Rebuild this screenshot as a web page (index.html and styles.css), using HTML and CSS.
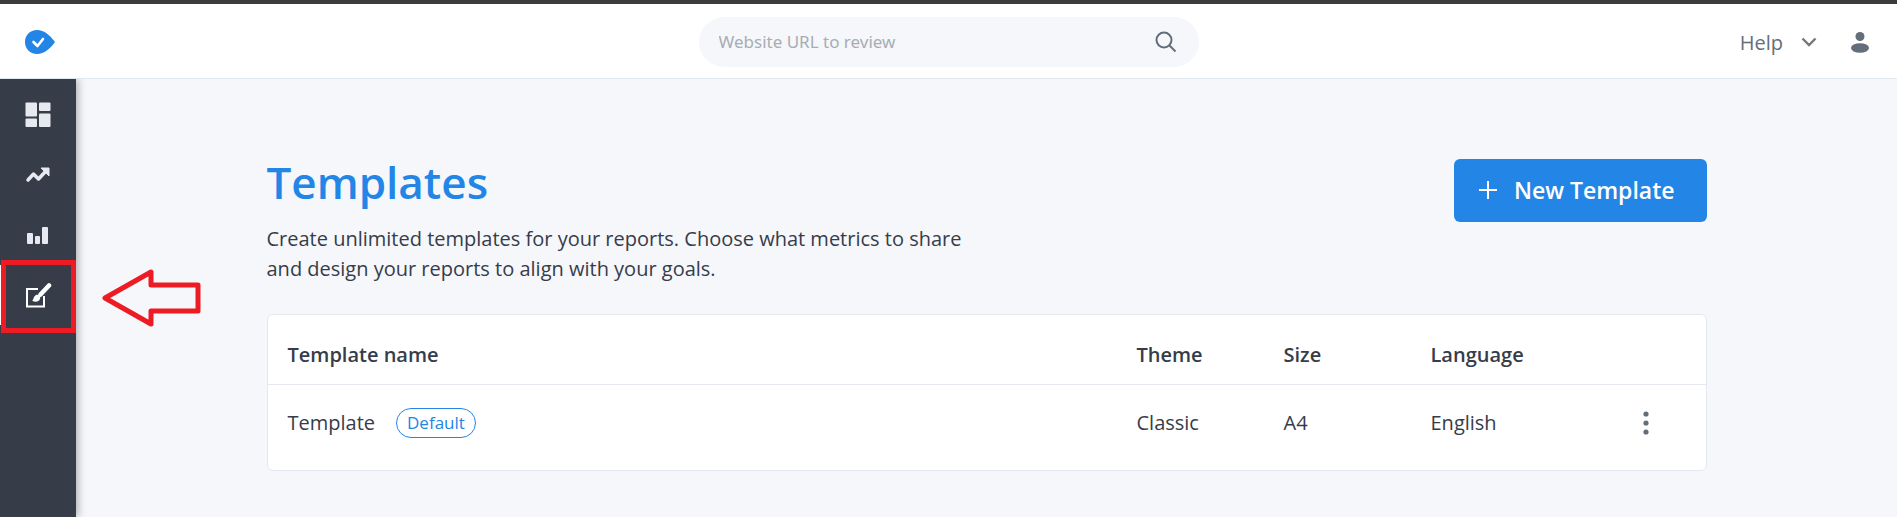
FILE: index.html
```
<!DOCTYPE html>
<html lang="en">

<head>
    <meta charset="UTF-8">
    <meta name="viewport" content="width=device-width, initial-scale=1.0">
    <title>Templates</title>
    <link rel="stylesheet" href="styles.css">
</head>

<body>
    <header class="topbar">
        <a class="logo" href="#" aria-label="Home">
            <svg width="30" height="24" viewBox="0 0 30 24">
                <path d="M12 0C5 0 0 5.2 0 12s5 12 12 12c7.500 0 13-5.500 17.500-11.300a1 1 0 0 0 0-1.400C25 5.500 19.500 0 12 0z" fill="#2386e6" />
                <path d="M8.500 12l4 4L18 9" fill="none" stroke="#fff" stroke-width="2.600" stroke-linecap="round" stroke-linejoin="round" />
            </svg>
        </a>

        <form class="search">
            <input class="search-input" type="text" aria-label="Website URL" placeholder="Website URL to review">
            <button class="icon-button" type="button" aria-label="Search">
                <svg width="22" height="22" viewBox="0 0 22 22" fill="none" stroke="#646e7b" stroke-width="2">
                    <circle cx="9" cy="9" r="7.500" />
                    <path d="M14.500 14.500L20.500 20.500" />
                </svg>
            </button>
        </form>

        <div class="account">
            <button class="help" type="button">
                Help
                <svg width="16" height="10" viewBox="0 0 16 10" fill="none" stroke="#777" stroke-width="2.400">
                    <path d="M1.500 1.500L8 8l6.500-6.500" />
                </svg>
            </button>
            <button class="icon-button" type="button" aria-label="Account">
                <svg width="18" height="21" viewBox="0 0 18 21" fill="#646e7b">
                    <circle cx="9" cy="4.500" r="4.500" />
                    <ellipse cx="9" cy="16" rx="9" ry="4.800" />
                </svg>
            </button>
        </div>
    </header>

    <div class="layout">
        <nav class="sidebar">
            <a class="nav-item" href="#" aria-label="Dashboard">
                <svg width="26" height="26" viewBox="0 0 26 26" fill="#e6e9ef">
                    <rect x="0.500" y="0.500" width="11.500" height="14" rx="1" />
                    <rect x="14" y="0.500" width="11.500" height="8.500" rx="1" />
                    <rect x="0.500" y="16.500" width="11.500" height="8.500" rx="1" />
                    <rect x="14" y="11.500" width="11.500" height="13.500" rx="1" />
                </svg>
            </a>
            <a class="nav-item" href="#" aria-label="Trends">
                <svg width="26" height="26" viewBox="0 0 26 26" fill="none" stroke="#e6e9ef" stroke-width="3.500">
                    <path d="M3 18L8.500 12l5 5L21 9" stroke-linecap="round" stroke-linejoin="round" />
                    <path d="M16 6h8v8z" fill="#e6e9ef" stroke-width="1" stroke-linejoin="round" />
                </svg>
            </a>
            <a class="nav-item" href="#" aria-label="Reports">
                <svg width="26" height="26" viewBox="0 0 26 26" fill="#e6e9ef">
                    <rect x="2" y="11" width="6" height="11" rx="1" />
                    <rect x="10" y="14" width="5" height="8" rx="1" />
                    <rect x="17" y="5" width="6" height="17" rx="1" />
                </svg>
            </a>
            <a class="nav-item active" href="#" aria-label="Templates">
                <svg width="26" height="26" viewBox="0 0 26 26">
                    <path d="M12 7H1v17.500h17V14" fill="none" stroke="#fff" stroke-width="2" />
                    <path d="M6 18.500c2-.5 1-4 4-5.500 2.500-1 5 1.500 4 4-1.200 3-5 3.500-8 1.500z" fill="#fff" />
                    <path d="M14.500 12.500l8.500-9" stroke="#fff" stroke-width="4.500" stroke-linecap="round" />
                </svg>
                <span class="highlight"></span>
                <svg class="pointer" width="100" height="60" viewBox="0 0 100 60">
                    <path d="M3 30L49 4v13h47v26H49v13z" fill="none" stroke="#ed1c24" stroke-width="5" stroke-linejoin="round" />
                </svg>
            </a>
        </nav>

        <main class="content">
            <div class="container">
                <div class="page-head">
                    <div class="intro">
                        <h1>Templates</h1>
                        <p>Create unlimited templates for your reports. Choose what metrics to share and design your reports to align with your goals.</p>
                    </div>
                    <button class="new-template" type="button">
                        <svg width="18" height="18" viewBox="0 0 18 18" stroke="#fff" stroke-width="2">
                            <path d="M9 0v18M0 9h18" />
                        </svg>
                        New Template
                    </button>
                </div>

                <div class="card">
                    <table class="templates">
                        <thead>
                            <tr>
                                <th class="col-name">Template name</th>
                                <th>Theme</th>
                                <th>Size</th>
                                <th>Language</th>
                                <td class="col-menu"></td>
                            </tr>
                        </thead>
                        <tbody>
                            <tr>
                                <td><span class="name">Template <span class="badge">Default</span></span></td>
                                <td>Classic</td>
                                <td>A4</td>
                                <td>English</td>
                                <td class="col-menu">
                                    <button class="icon-button" type="button" aria-label="More">
                                        <svg width="6" height="24" viewBox="0 0 6 24" fill="#646e7b">
                                            <circle cx="3" cy="3" r="2.600" />
                                            <circle cx="3" cy="12" r="2.600" />
                                            <circle cx="3" cy="21" r="2.600" />
                                        </svg>
                                    </button>
                                </td>
                            </tr>
                        </tbody>
                    </table>
                </div>
            </div>
        </main>
    </div>
</body>

</html>
```
FILE: styles.css
```
* {
    box-sizing: border-box;
}

body {
    margin: 0;
    min-height: 100vh;
    display: flex;
    flex-direction: column;
    font-family: "Open Sans", sans-serif;
    font-size: 20px;
    color: #373c49;
    background-color: #f5f7fb;
}

button {
    font-family: inherit;
    border: none;
    background: none;
    cursor: pointer;
}

svg {
    display: block;
}

.topbar {
    position: relative;
    z-index: 1;
    display: grid;
    grid-template-columns: 1fr 500px 1fr;
    align-items: center;
    padding: 13px 28px 11px;
    background-color: #fff;
    border-top: 4px solid #3c3c3c;
    border-bottom: 1px solid #e2e8ef;
}

.logo {
    justify-self: start;
    margin-left: -3px;
}

.search {
    display: flex;
    align-items: center;
    height: 50px;
    padding: 0 22px 0 20px;
    border-radius: 25px;
    background-color: #f5f7fb;
}

.search-input {
    flex: 1;
    padding: 0 0 2px;
    border: none;
    outline: none;
    background: none;
    font-family: "Noto Sans", sans-serif;
    font-size: 17px;
    color: #373c49;
}

.search-input::placeholder {
    color: #a8acb3;
}

.icon-button {
    padding: 0;
}

.account {
    justify-self: end;
    display: flex;
    align-items: center;
    gap: 34px;
}

.help {
    display: flex;
    align-items: center;
    gap: 18px;
    padding: 0;
    font-size: 20px;
    font-weight: 500;
    color: #646e7b;
}

.layout {
    flex: 1;
    display: flex;
}

.sidebar {
    width: 76px;
    padding-top: 6px;
    background-color: #373c49;
    box-shadow: 2px 0 8px rgba(0, 0, 0, 0.3);
}

.nav-item {
    position: relative;
    display: flex;
    align-items: center;
    justify-content: center;
    height: 60px;
}

.active {
    border-left: 1px solid #fff;
}

/* red box and arrow that point out the active item */
.highlight {
    position: absolute;
    inset: -5px 0 -8px 0;
    border: 5px solid #ed1c24;
}

.pointer {
    position: absolute;
    left: 101px;
    top: 3px;
}

.content {
    flex: 1;
    padding: 80px 32px 46px;
}

.container {
    max-width: 1440px;
    margin: 0 auto;
}

.page-head {
    display: flex;
    align-items: flex-start;
    justify-content: space-between;
    margin-bottom: 30px;
}

.intro {
    max-width: 720px;
}

h1 {
    margin: 0 0 19px;
    font-size: 44px;
    font-weight: 600;
    line-height: 46px;
    color: #2386e6;
}

p {
    margin: 0;
    line-height: 30px;
}

.new-template {
    display: flex;
    align-items: center;
    gap: 17px;
    height: 63px;
    padding: 0 32px 2px 25px;
    border-radius: 6px;
    font-size: 23px;
    font-weight: 600;
    color: #fff;
    background-color: #2386e6;
}

.card {
    padding-bottom: 9px;
    border: 1px solid #e5e8ee;
    border-radius: 6px;
    background-color: #fff;
}

.templates {
    width: 100%;
    table-layout: fixed;
    border-collapse: collapse;
}

.templates th,
.templates td {
    width: 147px;
    height: 77px;
    padding: 0;
    text-align: left;
}

.templates th {
    height: 69px;
    padding-top: 10px;
    font-weight: 600;
}

.templates thead tr {
    border-bottom: 1px solid #e5e8ee;
}

.templates .col-name {
    width: auto;
}

.templates .col-name,
.templates td:first-child {
    padding-left: 20px;
}

.templates .col-menu {
    width: 128px;
    height: auto;
    padding-left: 65px;
}

.col-menu .icon-button {
    display: block;
}

.name {
    display: flex;
    align-items: center;
    gap: 21px;
}

.badge {
    padding: 0 10px;
    border: 1px solid #2386e6;
    border-radius: 15px;
    font-size: 17px;
    line-height: 28px;
    color: #2386e6;
}
```
